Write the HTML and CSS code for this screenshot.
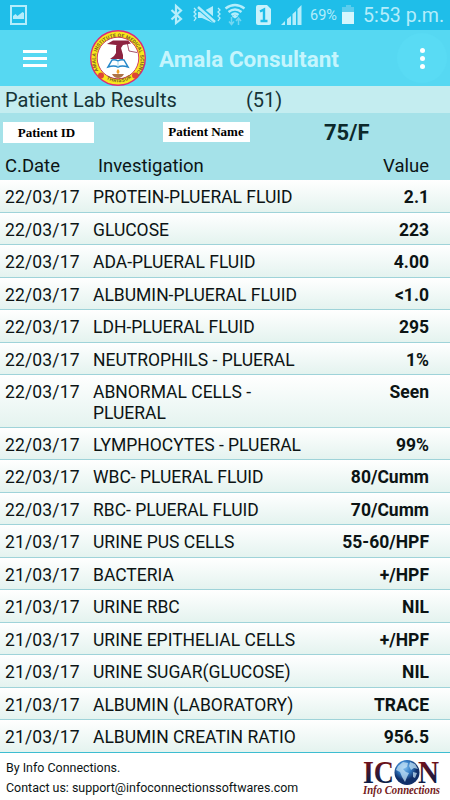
FILE: index.html
```html
<!DOCTYPE html>
<html lang="en">
<head>
    <meta charset="UTF-8">
    <meta name="viewport" content="width=device-width, initial-scale=1.0">
    <title>Amala Consultant</title>
    <link rel="stylesheet" href="styles.css">
</head>
<body>
    <!-- Status bar -->
    <div class="status-bar">
        <svg class="picture-icon" width="17" height="20" viewBox="0 0 17 20">
            <rect x="1" y="1" width="15" height="18" fill="none" stroke="#b4edfb" stroke-width="2"/>
            <path d="M3 14V11l2.500-2 2 2 5-4 1.500 1v6z" fill="#b4edfb"/>
        </svg>
        <svg class="status-icons" width="136" height="30" viewBox="0 0 136 30" fill="none" stroke="#b4edfb">
            <path d="M1.500 10l9.500 9-5 4V6l5 4.500-9.500 9" stroke-width="2.200"/>
            <path d="M28 12h4l11-6v17l-11-5h-4z" fill="#b4edfb" stroke="none"/>
            <path d="M27 6l20 17" stroke="#1fbee9" stroke-width="5"/>
            <path d="M28 7l17 15" stroke-width="2.400"/>
            <path d="M24 8l2 2-2 2 2 2-2 2 2 2-2 3M48 8l2 2-2 2 2 2-2 2 2 2-2 3" stroke-width="1.300"/>
            <path d="M55.500 8.500q9.500-7 19 0M58.500 12q6.500-5 13 0M61.500 15q3.500-3 7 0" stroke-width="2.400"/>
            <path d="M65 14.500l3 2-3 2-3-2z" fill="#b4edfb" stroke="none"/>
            <path d="M61.500 17v7M59 21.500l2.500 3 2.500-3M68.500 25v-6M66 21l2.500-3 2.500 3" stroke="#72d6f1" stroke-width="1.500"/>
            <path d="M88 5h9l4 4v14q0 2-2 2h-11q-2 0-2-2V7q0-2 2-2z" fill="#c8f2fc" stroke="none"/>
            <path d="M90 11.500l4-2v12M90.500 21h7" stroke="#1fbee9" stroke-width="2.400"/>
            <path d="M111 25l4-4v4zM117 19l4-3v9h-4zM122.500 14l3.500-3v14h-3.500zM127.500 9l4-4v20h-4z" fill="#b4edfb" stroke="none"/>
        </svg>
        <span class="battery-level">69%</span>
        <svg class="battery-icon" width="14" height="20" viewBox="0 0 14 20">
            <path d="M1 2h4V0h5v2h3v6H1z" fill="#5bcdee"/>
            <path d="M1 7h12v12H1z" fill="#d5f6fd"/>
        </svg>
        <span class="clock">5:53 p.m.</span>
    </div>

    <!-- App bar -->
    <div class="app-bar">
        <div class="menu-btn"><span></span><span></span><span></span></div>
        <svg class="app-logo" width="56" height="56" viewBox="0 0 56 56">
            <defs>
                <path id="ringTop" d="M11.300 44.700A22.500 22.500 0 1 1 44.700 44.700"/>
                <path id="ringBottom" d="M14 47.500Q28 57 42 47.500"/>
            </defs>
            <circle cx="28" cy="28" r="27.300" fill="#f8e71c" stroke="#dc2a78" stroke-width="1.400"/>
            <circle cx="28" cy="28" r="20.800" fill="#fff" stroke="#d23b62" stroke-width="1"/>
            <text class="ring-text"><textPath href="#ringTop" startOffset="5" textLength="101">AMALA INSTITUTE OF MEDICAL SCIENCES</textPath></text>
            <text class="ring-text"><textPath href="#ringBottom" startOffset="2.500" textLength="27">THRISSUR</textPath></text>
            <circle cx="11" cy="45.500" r="3" fill="#df4634"/>
            <circle cx="45" cy="45.500" r="3" fill="#df4634"/>
            <!-- Figure, book and lamp -->
            <path d="M17 14l6-3.500h15l3 3-8 1.500-2 3-5-3z" fill="#8d2340"/>
            <path d="M37 12l2 9 8 1.500" fill="none" stroke="#8d2340" stroke-width=".8"/>
            <circle cx="28.500" cy="17" r="2.500" fill="#8d2340"/>
            <path d="M26 18h5l2 7v4H20l4-3 2-3z" fill="#8d2340"/>
            <path d="M22 30l-4 7q6-2 10 0 4-2 10 0l-4-7q-3-1-6 1-3-2-6-1z" fill="#fff" stroke="#2487c9" stroke-width="1.500"/>
            <path d="M28 31v6" stroke="#9bd5ee"/>
            <path d="M28 39q-3 3 0 5 3-2 0-5" fill="#f2a126"/>
            <path d="M22 44h12q-2 4-6 4t-6-4z" fill="#ad7448"/>
        </svg>
        <h1>Amala Consultant</h1>
        <div class="more-btn"><span></span><span></span><span></span></div>
    </div>

    <div class="page-title">
        <span>Patient Lab Results</span>
        <span class="count">(51)</span>
    </div>

    <div class="patient">
        <span class="tag patient-id">Patient ID</span>
        <span class="tag patient-name">Patient Name</span>
        <span class="age">75/F</span>
    </div>

    <div class="columns">
        <span class="date">C.Date</span>
        <span class="test">Investigation</span>
        <span>Value</span>
    </div>

    <div class="results">
        <div class="row"><span class="date">22/03/17</span><span class="test">PROTEIN-PLUERAL FLUID</span><b>2.1</b></div>
        <div class="row"><span class="date">22/03/17</span><span class="test">GLUCOSE</span><b>223</b></div>
        <div class="row"><span class="date">22/03/17</span><span class="test">ADA-PLUERAL FLUID</span><b>4.00</b></div>
        <div class="row"><span class="date">22/03/17</span><span class="test">ALBUMIN-PLUERAL FLUID</span><b>&lt;1.0</b></div>
        <div class="row"><span class="date">22/03/17</span><span class="test">LDH-PLUERAL FLUID</span><b>295</b></div>
        <div class="row"><span class="date">22/03/17</span><span class="test">NEUTROPHILS - PLUERAL</span><b>1%</b></div>
        <div class="row tall"><span class="date">22/03/17</span><span class="test">ABNORMAL CELLS -<br>PLUERAL</span><b>Seen</b></div>
        <div class="row"><span class="date">22/03/17</span><span class="test">LYMPHOCYTES - PLUERAL</span><b>99%</b></div>
        <div class="row"><span class="date">22/03/17</span><span class="test">WBC- PLUERAL FLUID</span><b>80/Cumm</b></div>
        <div class="row"><span class="date">22/03/17</span><span class="test">RBC- PLUERAL FLUID</span><b>70/Cumm</b></div>
        <div class="row"><span class="date">21/03/17</span><span class="test">URINE PUS CELLS</span><b>55-60/HPF</b></div>
        <div class="row"><span class="date">21/03/17</span><span class="test">BACTERIA</span><b>+/HPF</b></div>
        <div class="row"><span class="date">21/03/17</span><span class="test">URINE RBC</span><b>NIL</b></div>
        <div class="row"><span class="date">21/03/17</span><span class="test">URINE EPITHELIAL CELLS</span><b>+/HPF</b></div>
        <div class="row"><span class="date">21/03/17</span><span class="test">URINE SUGAR(GLUCOSE)</span><b>NIL</b></div>
        <div class="row"><span class="date">21/03/17</span><span class="test">ALBUMIN (LABORATORY)</span><b>TRACE</b></div>
        <div class="row"><span class="date">21/03/17</span><span class="test">ALBUMIN CREATIN RATIO</span><b>956.5</b></div>
    </div>

    <div class="footer">
        <div class="contact">
            <p>By Info Connections.</p>
            <p>Contact us: support@infoconnectionssoftwares.com</p>
        </div>
        <svg class="company-logo" width="82" height="42" viewBox="0 0 82 42">
            <defs>
                <linearGradient id="letters" x1="0" y1="0" x2="0" y2="1">
                    <stop offset=".2" stop-color="#741019"/>
                    <stop offset=".75" stop-color="#101c45"/>
                </linearGradient>
                <radialGradient id="globe" cx=".4" cy=".3">
                    <stop offset="0" stop-color="#85c3f1"/>
                    <stop offset=".55" stop-color="#327ac3"/>
                    <stop offset="1" stop-color="#102f69"/>
                </radialGradient>
            </defs>
            <text class="icon-word" x="1" y="25" textLength="31" lengthAdjust="spacingAndGlyphs">IC</text>
            <text class="icon-word" x="56" y="25" textLength="21" lengthAdjust="spacingAndGlyphs">N</text>
            <circle cx="45" cy="14.500" r="12.500" fill="url(#globe)"/>
            <path d="M36 8l5-4 5 1-1 4-4 2 3 3 3 1-2 4-2 5-3-5-2-5-4-2zM48 4l5 2 3 5-4-1-3 2-2-4zM51 14l4 1-2 5-2-1z" fill="#c3e2f5" opacity=".75"/>
            <text class="company-name" x="1" y="36" textLength="77" lengthAdjust="spacingAndGlyphs">Info Connections</text>
        </svg>
    </div>
</body>
</html>
```
FILE: styles.css
```css
* {
    margin: 0;
    padding: 0;
    box-sizing: border-box;
}

body {
    width: 450px;
    height: 800px;
    overflow: hidden;
    background: white;
    color: #0c1414;
    font-family: Roboto, sans-serif;
    font-size: 17.5px;
}

/* Status bar */
.status-bar {
    display: flex;
    height: 30px;
    background: #1fbee9;
    color: #b4edfb;
}

.picture-icon {
    margin: 5px 0 0 10px;
}

.status-icons {
    margin-left: 143px;
}

.battery-level {
    margin-left: 4px;
    width: 31px;
    font-size: 14.5px;
    line-height: 31px;
}

.battery-icon {
    margin-top: 5px;
}

.clock {
    margin-left: 8px;
    font-size: 19.6px;
    line-height: 32px;
    white-space: nowrap;
}

/* App bar */
.app-bar {
    display: flex;
    align-items: center;
    height: 56px;
    background: #56d8f2;
}

.menu-btn {
    display: flex;
    flex-direction: column;
    gap: 4px;
    width: 24px;
    margin-left: 23px;
}

.menu-btn span {
    height: 3px;
    background: white;
}

.app-logo {
    margin-left: 43px;
}

.ring-text {
    font-size: 5px;
    font-weight: bold;
    fill: #7b5a26;
}

.app-bar h1 {
    width: 238px;
    margin-left: 13px;
    padding-top: 2px;
    color: #c5f5fd;
    font-size: 22.5px;
    font-weight: bold;
}

.more-btn {
    display: flex;
    flex-direction: column;
    align-items: center;
    justify-content: center;
    gap: 3px;
    width: 50px;
    height: 50px;
    padding-top: 1px;
    border-radius: 50%;
    background: #59dbf4;
}

.more-btn span {
    width: 5px;
    height: 5px;
    border-radius: 50%;
    background: white;
}

.page-title {
    display: flex;
    height: 27px;
    padding-left: 5px;
    background: #c4edf0;
    color: #163437;
    font-size: 20px;
    line-height: 29px;
}

.page-title span:first-child {
    width: 241px;
}

/* Patient details */
.patient {
    display: flex;
    height: 38px;
    padding: 9px 0 0 3px;
    background: #a5e2e9;
}

.tag {
    height: 21px;
    background: white;
    color: black;
    font: bold 13px/21px "Liberation Serif", serif;
    text-align: center;
}

.patient-id {
    width: 91px;
    padding-right: 4px;
}

.patient-name {
    width: 87px;
    height: 20px;
    margin-left: 69px;
    padding-right: 1px;
    line-height: 20px;
}

.age {
    margin-left: 74px;
    color: #0c292b;
    font-size: 22px;
    font-weight: bold;
    line-height: 21px;
}

.columns {
    display: flex;
    height: 29px;
    padding: 0 21px 0 5px;
    background: #a5e2e9;
    font-size: 18.5px;
    line-height: 30px;
}

.columns .date {
    width: 93px;
}

.test {
    flex: 1;
}

/* Results */
.row {
    display: flex;
    height: 32.5px;
    padding: 7px 21px 0 5px;
    border-bottom: 1px solid #9fd3d9;
    background: linear-gradient(#ffffff, #e4f3ef);
    line-height: 21px;
}

.row.tall {
    height: 52.5px;
}

.row .date {
    width: 88px;
    letter-spacing: 0.15px;
}

.row b {
    font-weight: bold;
}

.row:last-child {
    border-color: #3dbdd1;
}

/* Footer */
.footer {
    display: flex;
    justify-content: space-between;
    padding: 5px 6px 0 6px;
}

.contact {
    font-size: 12.45px;
    line-height: 20px;
}

.company-logo {
    overflow: visible;
}

.icon-word {
    font-family: "Liberation Serif", serif;
    font-size: 32px;
    font-weight: bold;
    fill: url(#letters);
}

.company-name {
    font-family: "Liberation Serif", serif;
    font-size: 12px;
    font-style: italic;
    font-weight: bold;
    fill: #741a20;
}
```
